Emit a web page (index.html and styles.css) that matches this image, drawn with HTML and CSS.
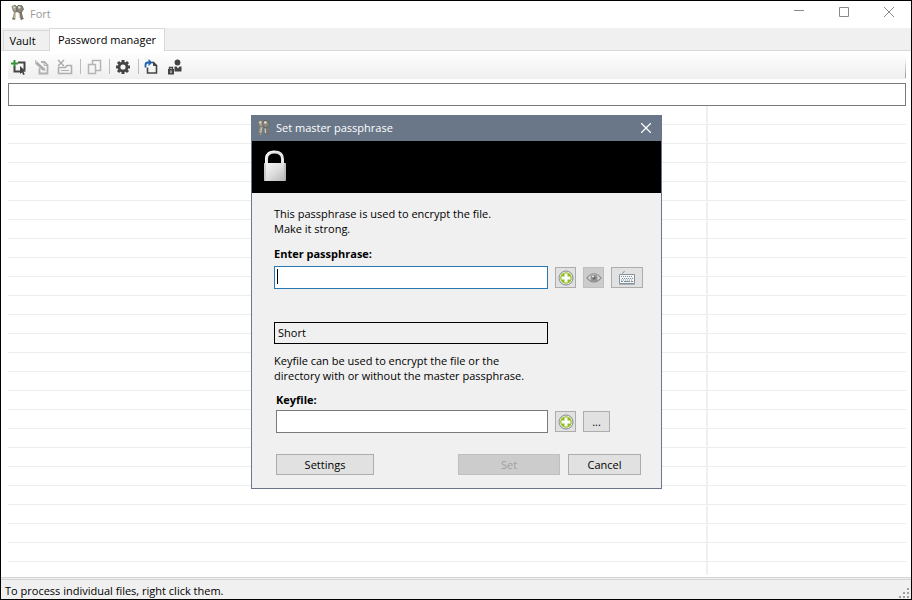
FILE: index.html
```html
<!DOCTYPE html>
<html lang="en">
<head>
    <meta charset="UTF-8">
    <meta name="viewport" content="width=device-width, initial-scale=1.0">
    <title>Fort</title>
    <link rel="stylesheet" href="styles.css">
</head>
<body>
    <svg class="defs" aria-hidden="true">
        <symbol id="keys" viewBox="0 0 14 18">
            <path d="M4 7 2 15.500M4.500 7l-1 9" stroke="#a39c80" stroke-width="1.400" fill="none"/>
            <path d="M8.500 7l2 9M10 8l1.500 7" stroke="#7d776a" stroke-width="1.500" fill="none"/>
            <path d="M8 9.500 8.600 14" stroke="#d8d2b4" stroke-width="1.200"/>
            <path d="M5 8 3.600 14" stroke="#e0dac0" stroke-width=".8"/>
            <path d="M1 2.500 4 1l3 3-1.500 4-3-.5z" fill="#a29d8e" stroke="#77736a" stroke-width=".8"/>
            <path d="M7 1.500l4 .3 1.500 3.500L10 9 6 7.500 5.500 4z" fill="#8b877c" stroke="#5f5d57" stroke-width=".8"/>
            <circle cx="8.300" cy="3.400" r="1.200" fill="#eeeade"/>
            <circle cx="3.200" cy="3.500" r="1" fill="#e4dfd0"/>
            <path d="M1.500 14.500h2M10.500 14.500h2" stroke="#6f6a60" stroke-width="1.500"/>
        </symbol>
        <symbol id="plus" viewBox="0 0 16 16">
            <circle cx="8" cy="8" r="7" fill="#f4f6ee" stroke="#7f8794"/>
            <circle cx="8" cy="8" r="5.800" fill="#93bd1e"/>
            <path d="M6.500 3.500h3v3h3v3h-3v3h-3v-3h-3v-3h3z" fill="#fff"/>
        </symbol>
    </svg>

    <div class="window">
        <div class="titlebar">
            <svg class="app-icon" width="14" height="18"><use href="#keys"/></svg>
            <span class="title">Fort</span>
            <div class="window-buttons">
                <button type="button" aria-label="Minimize"><svg width="10" height="10"><path d="M0 3.500h10" stroke="#8a8a8a"/></svg></button>
                <button type="button" aria-label="Maximize"><svg width="10" height="10"><path d="M.5.5h9v9h-9z" fill="none" stroke="#8a8a8a"/></svg></button>
                <button type="button" aria-label="Close"><svg width="10" height="10"><path d="M0 0l10 10M10 0 0 10" stroke="#8a8a8a"/></svg></button>
            </div>
        </div>

        <div class="tabs">
            <button type="button" class="tab">Vault</button>
            <button type="button" class="tab active">Password manager</button>
        </div>

        <div class="page">
            <div class="toolbar">
                <button type="button" aria-label="Add">
                    <svg width="16" height="16">
                        <path d="M7 3.500h6.500v8M3.500 7v5.500H9" fill="none" stroke="#444" stroke-width="2"/>
                        <path d="M0 4.500h7M3.500 1v7" stroke="#38913b" stroke-width="2"/>
                        <path d="M9 7l6 5.500-2.500.3 1.300 2.400-1.600.8-1.200-2.500L9 15z" fill="#444"/>
                    </svg>
                </button>
                <button type="button" aria-label="Edit" disabled>
                    <svg width="16" height="16">
                        <path d="M5.500 9v5.500h8V6L10.500 3H7" fill="none" stroke="#b0b0b0" stroke-width="1.800"/>
                        <path d="M10 2.500V6.500h4" fill="none" stroke="#b0b0b0"/>
                        <path d="M1 2.500 10.500 11" stroke="#fafafa" stroke-width="4"/>
                        <path d="M2 3.500 9.500 10.300" stroke="#adadad" stroke-width="3"/>
                        <path d="M8 11l3.500 1-1-3.500zM1 1.500h2L1 4z" fill="#adadad"/>
                    </svg>
                </button>
                <button type="button" aria-label="Delete" disabled>
                    <svg width="16" height="16">
                        <path d="M1.500 8.500v6h13v-8H10L8.500 8.500H1" fill="none" stroke="#b0b0b0" stroke-width="1.600"/>
                        <path d="M4 11.500h8" stroke="#b0b0b0"/>
                        <path d="M1 1l6 6M7 1 1 7" stroke="#a8a8a8" stroke-width="1.400"/>
                    </svg>
                </button>
                <span class="separator"></span>
                <button type="button" aria-label="Copy" disabled>
                    <svg width="16" height="16">
                        <path d="M6.500 1.500h8v10h-8z" fill="#fafafa" stroke="#b4b4b4" stroke-width="1.500"/>
                        <path d="M2.500 5.500h7v9h-7z" fill="#f4f4f4" stroke="#b4b4b4" stroke-width="1.500"/>
                    </svg>
                </button>
                <span class="separator"></span>
                <button type="button" aria-label="Settings">
                    <svg width="16" height="16" viewBox="-8 -8 16 16">
                        <g stroke="#444" stroke-width="3">
                            <path d="M0-7V7M-7 0H7M-5-5 5 5M-5 5 5-5"/>
                        </g>
                        <circle r="5.300" fill="#444"/>
                        <circle r="2.600" fill="#f8f8f8"/>
                    </svg>
                </button>
                <span class="separator"></span>
                <button type="button" aria-label="Import">
                    <svg width="16" height="16">
                        <path d="M3.500 8.500v5.500h9V6.500l-3-3H8" fill="none" stroke="#444" stroke-width="1.600"/>
                        <path d="M9 2.500V7h4.500z" fill="#444"/>
                        <path d="M1.500 8.500V6q0-2.500 2.500-2.500h2" fill="none" stroke="#1f61ad" stroke-width="1.800"/>
                        <path d="M4.500 0l4 3.500-4 3.500z" fill="#1f61ad"/>
                    </svg>
                </button>
                <button type="button" aria-label="Lock">
                    <svg width="16" height="16">
                        <circle cx="10.500" cy="3.500" r="2.900" fill="#444"/>
                        <path d="M7.500 7.500l2 0 1.500 2 1.500-2h2v5h-7z" fill="#444"/>
                        <path d="M2.500 10V8.500h3V10" fill="none" stroke="#444" stroke-width="1.400"/>
                        <path d="M1 10h6v5.500H1z" fill="#444"/>
                        <path d="M4 11.500v2.500" stroke="#f4f4f4"/>
                    </svg>
                </button>
                <span class="toolbar-end"></span>
            </div>
            <input class="search" type="text" aria-label="Search">
            <div class="list">
                <div class="column"></div>
                <div class="column narrow"></div>
            </div>
        </div>

        <div class="statusbar">
            <span>To process individual files, right click them.</span>
            <svg class="grip" width="12" height="12">
                <path d="M8 1h2v2H8zM4 5h2v2H4zM8 5h2v2H8zM0 9h2v2H0zM4 9h2v2H4zM8 9h2v2H8z" fill="#a0a0a0"/>
            </svg>
        </div>
    </div>

    <form class="dialog" role="dialog" aria-labelledby="dialogTitle">
        <div class="dialog-title">
            <svg width="14" height="18"><use href="#keys"/></svg>
            <span id="dialogTitle">Set master passphrase</span>
            <button type="button" aria-label="Close"><svg width="10" height="10"><path d="M0 0l10 10M10 0 0 10" stroke="#fff" stroke-width="1.300"/></svg></button>
        </div>
        <div class="banner">
            <svg width="24" height="32">
                <defs>
                    <linearGradient id="metal" x1="0" y1="0" x2="1" y2="1">
                        <stop offset="0" stop-color="#f6f6f6"/>
                        <stop offset=".5" stop-color="#dedede"/>
                        <stop offset="1" stop-color="#b4b4b4"/>
                    </linearGradient>
                </defs>
                <path d="M3.500 15V9Q3.500 2 11.500 2t8 7v6" fill="none" stroke="#e6e6e6" stroke-width="3"/>
                <path d="M2.500 14V9Q2.500 1.200 11.500 1.200" fill="none" stroke="#fff"/>
                <rect x="1" y="13" width="22" height="18" rx="1" fill="url(#metal)"/>
                <path d="M2 14v16M22 14v16" stroke="#aaa"/>
            </svg>
        </div>
        <div class="dialog-body">
            <p>This passphrase is used to encrypt the file.</p>
            <p>Make it strong.</p>
            <label for="passphrase">Enter passphrase:</label>
            <div class="field">
                <div class="input-box">
                    <input class="focused" type="password" id="passphrase">
                    <span class="caret"></span>
                </div>
                <button type="button" class="button square" aria-label="Generate passphrase"><svg width="16" height="16"><use href="#plus"/></svg></button>
                <button type="button" class="button square" aria-label="Show passphrase" disabled>
                    <svg width="16" height="12">
                        <path d="M1 6Q8-2.500 15 6 8 14 1 6z" fill="#dcdcdc" stroke="#8f8f8f" stroke-width="1.200"/>
                        <circle cx="8" cy="6" r="3.600" fill="#8f9497"/>
                        <circle cx="8" cy="6" r="1.600" fill="#666"/>
                        <circle cx="7" cy="4.500" r="1" fill="#eee"/>
                    </svg>
                </button>
                <button type="button" class="button keyboard" aria-label="On-screen keyboard">
                    <svg width="18" height="16">
                        <path d="M4.500 4V3.500L6.500 1" fill="none" stroke="#85929b"/>
                        <path d="M1.500 4.500h15v9h-15z" fill="#f3f7f9" stroke="#85929b"/>
                        <path d="M3 6.500h12M4 8.500h11M3 10h12" stroke="#7f8d96" stroke-dasharray="1 1"/>
                        <path d="M3 11.500h2M6 11.500h6M13 11.500h2" stroke="#7f8d96"/>
                        <path d="M1 14.500h16" stroke="#a9b3b9"/>
                    </svg>
                </button>
            </div>
            <output class="strength" for="passphrase">Short</output>
            <p>Keyfile can be used to encrypt the file or the</p>
            <p>directory with or without the master passphrase.</p>
            <div class="keyfile">
                <label for="keyfile">Keyfile:</label>
                <div class="field">
                    <div class="input-box"><input type="text" id="keyfile"></div>
                    <button type="button" class="button square" aria-label="Create keyfile"><svg width="16" height="16"><use href="#plus"/></svg></button>
                    <button type="button" class="button browse">...</button>
                </div>
                <div class="actions">
                    <button type="button" class="button settings">Settings</button>
                    <button type="submit" class="button set" disabled>Set</button>
                    <button type="button" class="button cancel">Cancel</button>
                </div>
            </div>
        </div>
    </form>
</body>
</html>
```

FILE: styles.css
```css
* {
    box-sizing: border-box;
}

body {
    margin: 0;
    font-family: "Open Sans", "Noto Sans", sans-serif;
    font-size: 11px;
    line-height: 15px;
    color: #000;
}

button, input {
    font: inherit;
    color: inherit;
    margin: 0;
    padding: 0;
}

svg {
    display: block;
    flex-shrink: 0;
}

.defs {
    position: absolute;
    width: 0;
    height: 0;
}

.window {
    display: flex;
    flex-direction: column;
    min-height: 100vh;
    background: #fff;
    border: 1px solid #000;
}

/* title bar */
.titlebar {
    display: flex;
    align-items: center;
    height: 27px;
    padding-left: 10px;
}

.title {
    margin-left: 5px;
    padding-bottom: 2px;
    color: #999;
}

.app-icon {
    margin-bottom: 4px;
}

.window-buttons {
    display: flex;
    margin-left: auto;
    padding-bottom: 5px;
}

.window-buttons button {
    display: flex;
    align-items: center;
    justify-content: center;
    width: 45px;
    height: 24px;
    border: none;
    background: none;
}

/* tabs */
.tabs {
    display: flex;
    align-items: flex-end;
    height: 23px;
    padding-left: 2px;
    background: #f0f0f0;
    border-bottom: 1px solid #d9d9d9;
}

.tab {
    width: 46px;
    height: 20px;
    padding-right: 8px;
    background: #f0f0f0;
    border: 1px solid #d9d9d9;
    border-width: 1px 0 0 1px;
}

.tab.active {
    width: 116px;
    height: 23px;
    margin-bottom: -1px;
    padding: 0 0 2px;
    background: #fff;
    border-width: 1px 1px 0;
}

.page {
    display: flex;
    flex: 1;
    flex-direction: column;
    padding: 3px 5px 2px 7px;
}

/* toolbar */
.toolbar {
    display: flex;
    align-items: center;
    height: 25px;
    padding-left: 3px;
    background: linear-gradient(#fdfdfd, #efefef);
}

.toolbar button {
    width: 16px;
    height: 16px;
    margin-right: 7px;
    border: none;
    background: none;
}

.separator {
    width: 1px;
    height: 15px;
    margin-right: 5px;
    background: #bdbdbd;
}

.toolbar-end {
    width: 1px;
    height: 19px;
    margin: 4px 0 0 auto;
    background: linear-gradient(#f4f4f4, #999);
}

.search {
    height: 23px;
    margin-top: 4px;
    padding: 0 3px;
    border: 1px solid #7a7a7a;
    outline: none;
}

/* list */
.list {
    display: flex;
    flex: 1;
}

.column {
    flex: 1;
    background: repeating-linear-gradient(#fff 0, #fff 18px, #ededed 18px, #ededed 19px);
}

.column.narrow {
    flex: 0 0 200px;
    border-left: 2px solid #edeff0;
}

/* status bar */
.statusbar {
    display: flex;
    align-items: flex-end;
    justify-content: space-between;
    height: 22px;
    padding-left: 4px;
    background: #f0f0f0;
    border-top: 3px double #d4d4d4;
}

.statusbar span {
    padding-bottom: 1px;
}

/* dialog */
.dialog {
    position: absolute;
    top: 115px;
    left: 251px;
    width: 411px;
    background: #f0f0f0;
    border: 1px solid #697789;
}

.dialog-title {
    display: flex;
    align-items: center;
    height: 25px;
    padding: 0 10px 2px 5px;
    background: #697789;
    color: #fff;
}

.dialog-title span {
    margin-left: 5px;
}

.dialog-title button {
    margin-left: auto;
    border: none;
    background: none;
}

.banner {
    height: 52px;
    padding: 9px 11px;
    background: #000;
}

.dialog-body {
    padding: 13px 18px 13px 22px;
}

.dialog-body p {
    margin: 0;
}

.dialog-body label {
    display: block;
    margin: 10px 0 5px;
    font-weight: bold;
}

.field {
    display: flex;
    align-items: center;
    gap: 7px;
}

.input-box {
    position: relative;
    width: 274px;
    height: 23px;
}

.input-box input {
    display: block;
    width: 100%;
    height: 100%;
    padding: 0 3px;
    background: #fff;
    border: 1px solid #7a7a7a;
    outline: none;
}

.input-box .focused {
    border-color: #2878b4;
}

.caret {
    position: absolute;
    top: 3px;
    left: 3px;
    width: 1px;
    height: 15px;
    background: #000;
}

.button {
    display: flex;
    align-items: center;
    justify-content: center;
    height: 21px;
    background: #e1e1e1;
    border: 1px solid #adadad;
}

.button:disabled {
    background: #ccc;
    border-color: #bfbfbf;
    color: #a0a0a0;
}

.square {
    width: 21px;
}

.keyboard {
    width: 32px;
}

.browse {
    width: 27px;
}

.strength {
    display: block;
    width: 274px;
    height: 22px;
    margin: 33px 0 9px;
    padding: 2px 3px;
    border: 1px solid #000;
}

.keyfile {
    padding-left: 2px;
}

.keyfile label {
    margin: 9px 0 3px;
}

.keyfile .input-box {
    width: 272px;
}

.actions {
    display: flex;
    gap: 8px;
    margin: 21px 2px 0 0;
}

.settings {
    width: 98px;
    margin-right: auto;
}

.set {
    width: 102px;
}

.cancel {
    width: 73px;
}
```
